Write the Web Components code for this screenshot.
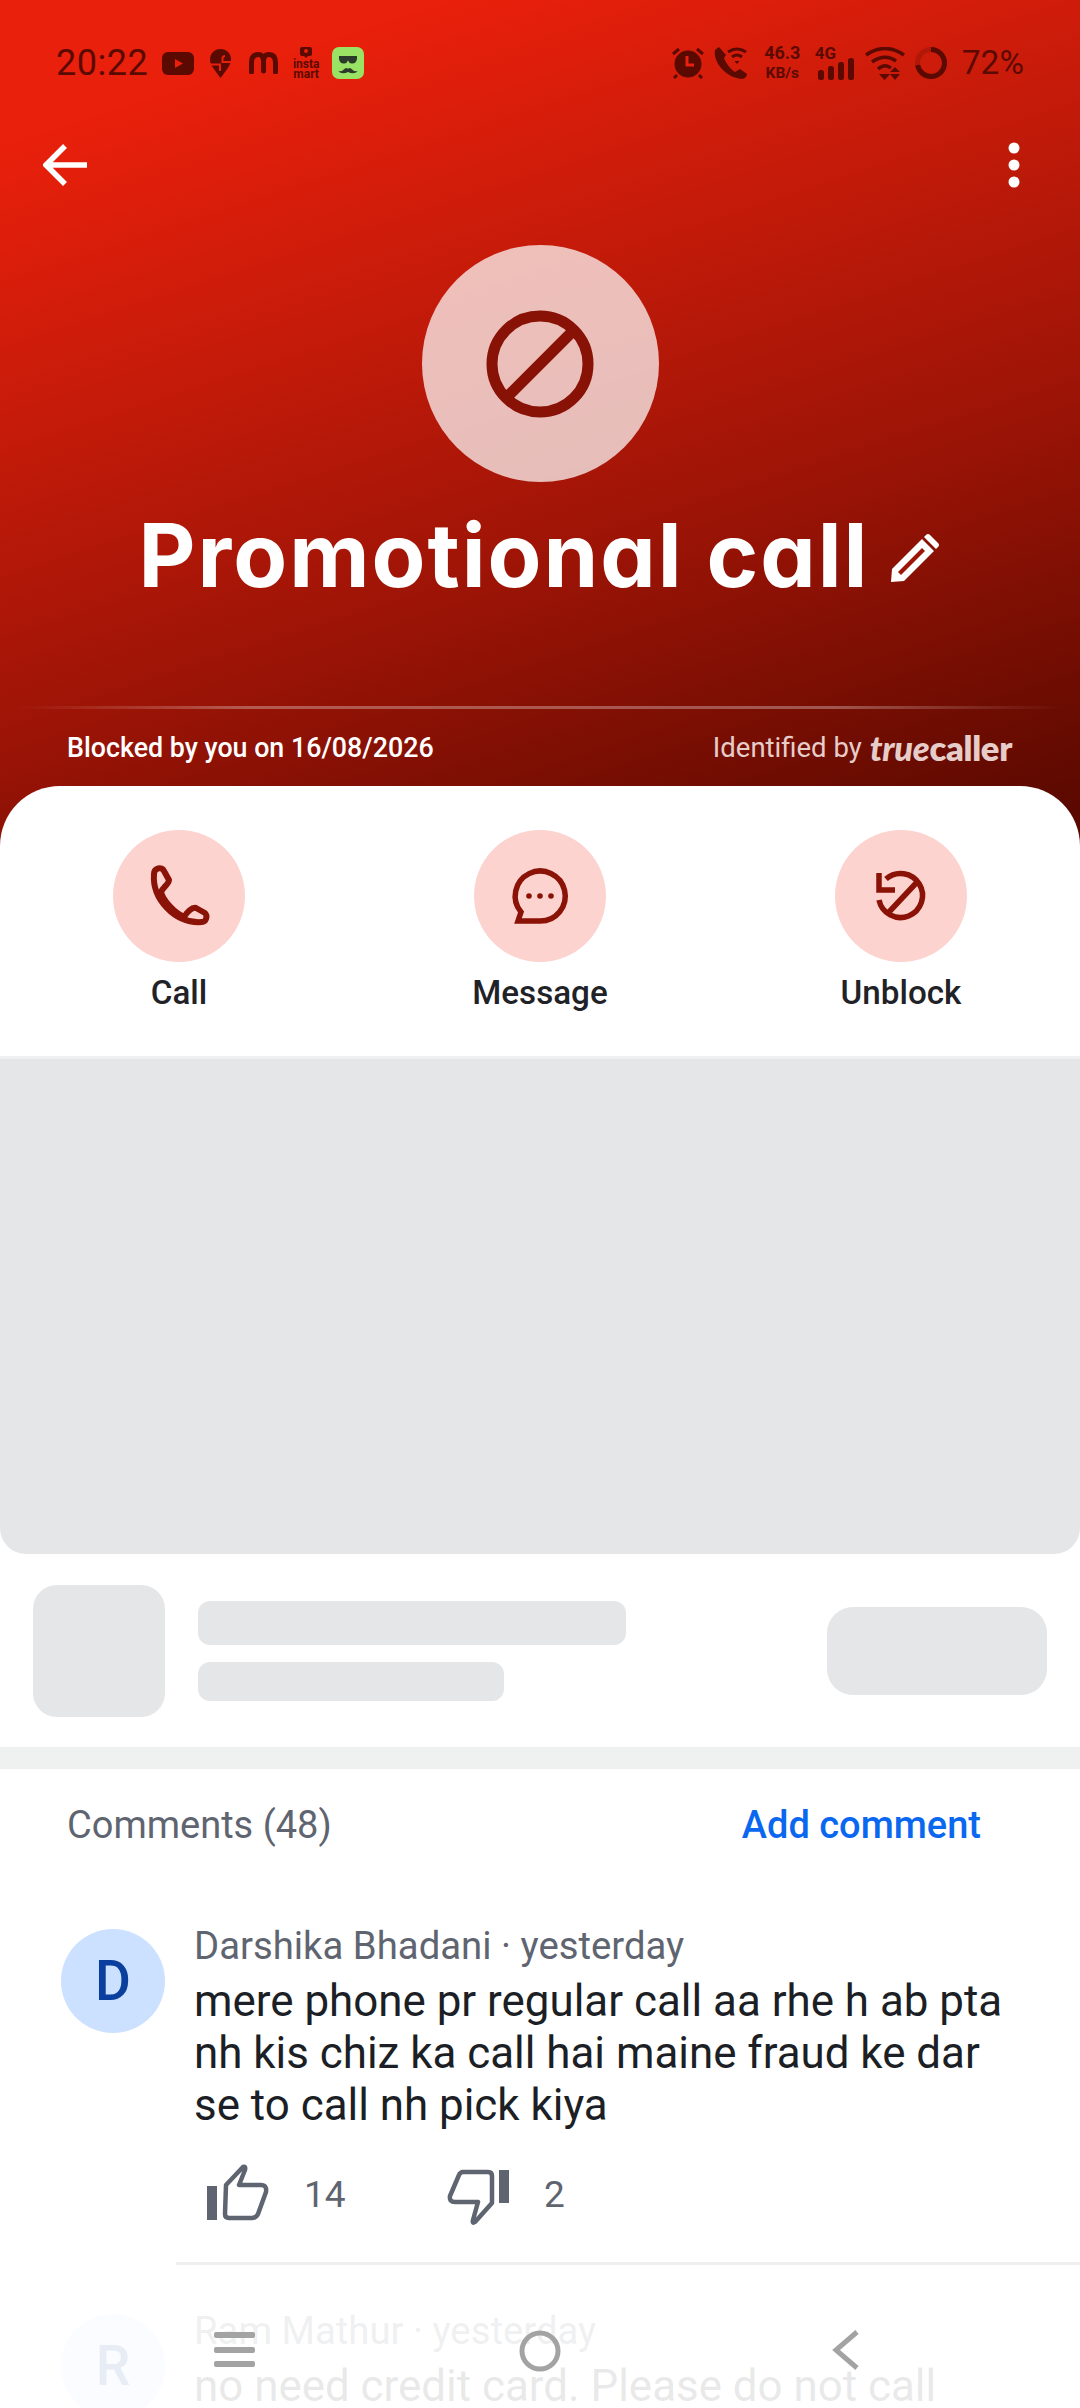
<!doctype html>
<html>
<head>
<meta charset="utf-8">
<style>
html, body { margin: 0; background: #fff; }
body { width: 1080px; height: 2408px; overflow: hidden; position: relative; font-family: Roboto, "Liberation Sans", sans-serif; }
</style>
</head>
<body>
<tc-hero name="Promotional call" blocked="Blocked by you on 16/08/2026"></tc-hero>
<tc-actions>
  <tc-action label="Call" icon="call"></tc-action>
  <tc-action label="Message" icon="message"></tc-action>
  <tc-action label="Unblock" icon="unblock"></tc-action>
</tc-actions>
<tc-skeleton></tc-skeleton>
<tc-comments count="48">
  <tc-comment name="Darshika Bhadani" time="yesterday" likes="14" dislikes="2">mere phone pr regular call aa rhe h ab pta nh kis chiz ka call hai maine fraud ke dar se to call nh pick kiya</tc-comment>
  <tc-comment name="Ram Mathur" time="yesterday">no need credit card. Please do not call</tc-comment>
</tc-comments>
<tc-nav></tc-nav>

<script>
function attach(el, html) {
  const tpl = document.createElement("template");
  tpl.innerHTML = html;
  el.attachShadow({ mode: "open" }).appendChild(tpl.content.cloneNode(true));
}

class TcStatusBar extends HTMLElement {
  constructor() {
    super();
    attach(this, `<style>
:host { display: flex; align-items: center; box-sizing: border-box; height: 126px; padding: 46px 56px 46px; color: #5b0a02; font-family: Roboto, sans-serif; }
svg { display: block; flex: none; }
.time { font-size: 36px; line-height: 34px; letter-spacing: .5px; }
.pct { font-size: 33.5px; line-height: 34px; }
.right { margin-left: auto; display: flex; align-items: center; }
.insta { width: 28px; margin-left: 14px; display: flex; flex-direction: column; align-items: center; font-size: 12px; line-height: 10px; font-weight: 700; }
.speed { margin-left: 16px; width: 39px; text-align: center; font-weight: 700; white-space: nowrap; }
.speed div:first-child { font-size: 18px; line-height: 20px; }
.speed div:last-child { font-size: 15.5px; line-height: 20px; }
.net { margin-left: 13px; position: relative; width: 40px; height: 34px; }
.net span { position: absolute; left: 0; top: -1px; font-size: 17px; line-height: 17px; font-weight: 700; }
.net svg { position: absolute; left: 3px; bottom: 0; }
</style>
<span class="time">20:22</span>
<svg style="margin-left:14px" width="32" height="23" viewBox="0 0 32 23"><rect width="32" height="23" rx="6" fill="currentColor"/><path d="M13 7l8 4.5-8 4.5z" fill="#e8200c"/></svg>
<svg style="margin-left:16px" width="21" height="29" viewBox="0 0 21 29"><path d="M10.5 0C4.5 0 0 4.5 0 10.5 0 15 3 19 10.5 29 18 19 21 15 21 10.5 21 4.5 16.5 0 10.500 0z" fill="currentColor"/><path d="M21 13H12.500V9.500Q12.500 7 15 7M0 15.500H10V22" fill="none" stroke="#e8200c" stroke-width="2"/></svg>
<svg style="margin-left:18px" width="29" height="22" viewBox="0 0 29 22"><path d="M2.500 20V11Q2.500 2.500 9 2.500 14.500 2.500 14.500 9V19M14.500 9Q14.500 2.500 20 2.500 26.500 2.500 26.500 11V20" fill="none" stroke="currentColor" stroke-width="5" stroke-linecap="round"/></svg>
<div class="insta"><svg width="12" height="11" viewBox="0 0 12 11"><path d="M2 0H10Q12 0 12 2V7Q12 9 10 9H8L6 11 4 9H2Q0 9 0 7V2Q0 0 2 0z" fill="currentColor"/><circle cx="6" cy="4" r="2" fill="#e8200c"/></svg><span style="margin-top:1px">insta</span><span>mart</span></div>
<svg style="margin-left:12px" width="32" height="32" viewBox="0 0 32 32"><rect width="32" height="32" rx="7" fill="#9ae264"/><path d="M7 9H25V12Q24 17 19.500 16.500 17 16 16 13.500 15 16 12.500 16.500 8 17 7 12z" fill="#2b3a2b"/><path d="M6 24Q10 25 13 21.500 15 20.500 16 22 17 20.500 19 21.500 22 25 26 24 22 28 16 25 10 28 6 24z" fill="#2b3a2b"/></svg>
<div class="right">
<svg width="32" height="32" viewBox="0 0 32 32"><path d="M1 7L7 2M31 7L25 2M5 28L2 31M27 28L30 31" stroke="currentColor" stroke-width="3"/><circle cx="16" cy="17" r="13.500" fill="currentColor"/><path d="M15 9V18H22" fill="none" stroke="#e8200c" stroke-width="3"/></svg>
<svg style="margin-left:10px" width="33" height="32" viewBox="0 0 33 32"><path d="M5 0L1 3C-1 14 10 30 28 32Q33 31 33 27L26 22 21 25C16 22 12 16 10 11L12 8z" fill="currentColor"/><path d="M14 5Q23-1 32 5M18 10Q23 6 28 10" fill="none" stroke="currentColor" stroke-width="3"/><path d="M20.500 14H25.500L23 17z" fill="currentColor"/></svg>
<div class="speed"><div>46.3</div><div>KB/s</div></div>
<div class="net"><span>4G</span><svg width="37" height="22" viewBox="0 0 37 22"><rect x="0" y="12" width="6" height="10" rx="2.500" fill="currentColor"/><rect x="10" y="8" width="6" height="14" rx="2.500" fill="currentColor"/><rect x="20" y="4" width="6" height="18" rx="2.500" fill="currentColor"/><rect x="30" y="0" width="6" height="22" rx="2.500" fill="currentColor"/></svg></div>
<svg style="margin-left:10px" width="40" height="33" viewBox="0 0 40 33"><path d="M1 8Q20-5 39 8M7 15Q20 6 31 14M13 22Q20 16 26 21" fill="none" stroke="currentColor" stroke-width="3.500"/><path d="M14 27H25L19.500 33zM30 20L35 25H25zM25 27H35L30 33z" fill="currentColor"/></svg>
<svg style="margin-left:10px" width="32" height="34" viewBox="0 0 32 34"><circle cx="16" cy="17" r="13.500" fill="none" stroke="currentColor" stroke-opacity=".25" stroke-width="5"/><circle cx="16" cy="17" r="13.500" fill="none" stroke="currentColor" stroke-width="5" stroke-dasharray="61 85" transform="rotate(-90 16 17)"/></svg>
<span class="pct" style="margin-left:15px">72%</span>
</div>`);
  }
}

class TcHero extends HTMLElement {
  constructor() {
    super();
    attach(this, `<style>
:host { display: block; height: 846px; background: linear-gradient(162deg, #e9200b 12%, #c71b0a 35%, #9c1406 62%, #5a0900 97%); color: #fff; font-family: Roboto, sans-serif; }
.bar { display: flex; align-items: center; justify-content: space-between; height: 78px; padding: 0 60px 0 43px; }
svg { display: block; }
.avatar { margin: 41px auto 0; width: 237px; height: 237px; border-radius: 50%; background: rgba(255,255,255,.72); display: flex; align-items: center; justify-content: center; }
.title { margin-top: 23px; display: flex; justify-content: center; height: 100px; }
h1 { margin: 0; font: 700 88px/100px Inter, sans-serif; font-feature-settings: "cv11"; letter-spacing: 2px; white-space: nowrap; }
.title svg { margin: 27px 0 0 20px; }
.rule { margin: 101px 16px 0; height: 3px; background: linear-gradient(90deg, rgba(255,255,255,0), rgba(255,255,255,.3) 22%, rgba(255,255,255,.3) 78%, rgba(255,255,255,0)); }
.foot { margin-top: 21px; padding: 0 68px 0 67px; display: flex; justify-content: space-between; font-size: 27px; line-height: 36px; }
.blocked { font-size: 26.8px; font-weight: 500; }
.by { color: #e6cdca; display: flex; font-size: 27.5px; }
.logo { margin-left: 8px; font: 800 34.5px/36px Lato, sans-serif; white-space: nowrap; letter-spacing: -.3px; }
.logo i { font-family: Lato, sans-serif; font-weight: 900; }
</style>
<tc-status-bar></tc-status-bar>
<div class="bar">
<svg width="44" height="44" viewBox="0 0 44 44"><path d="M44 22H4M22 3L3 22 22 41" fill="none" stroke="#fff" stroke-width="5.500"/></svg>
<svg width="12" height="46" viewBox="0 0 12 46"><circle cx="6" cy="6" r="5.500" fill="#fff"/><circle cx="6" cy="23" r="5.500" fill="#fff"/><circle cx="6" cy="40" r="5.500" fill="#fff"/></svg>
</div>
<div class="avatar"><svg style="filter:blur(.6px)" width="110" height="110" viewBox="0 0 110 110"><circle cx="55" cy="55" r="48" fill="none" stroke="#881206" stroke-width="11"/><path d="M21 89L89 21" stroke="#881206" stroke-width="11"/></svg></div>
<div class="title"><h1 id="name"></h1><svg width="52" height="52" viewBox="0 0 52 52"><path d="M2 50L3 37 33 7 45 19 15 49zM37 3Q39 1 41 3L49 11Q51 13 49 15L47 17 35 5z" fill="#fff"/><path d="M9 40L33 16 36 19 12 43z" fill="#9c1507"/></svg></div>
<div class="rule"></div>
<div class="foot"><span class="blocked" id="blocked"></span><span class="by">Identified by<span class="logo"><i>true</i>caller</span></span></div>`);
  }
  connectedCallback() {
    this.shadowRoot.getElementById("name").textContent = this.getAttribute("name");
    this.shadowRoot.getElementById("blocked").textContent = this.getAttribute("blocked");
  }
}

class TcActions extends HTMLElement {
  constructor() {
    super();
    attach(this, `<style>
:host { display: grid; position: relative; grid-template-columns: repeat(3, 361px); justify-content: center; box-sizing: border-box; height: 273px; margin-top: -60px; padding-top: 44px; background: #fff; border-radius: 60px 60px 0 0; border-bottom: 3px solid #eff0f1; }
</style><slot></slot>`);
  }
}

const ACTION_ICONS = {
  call: `<path transform="translate(-8 3)" d="M49 41C49 35 57 33 59 38L64 47C64 51 58 54 56 59 58 68 70 80 79 84 82 79 87 74 91 75L100 80C103 83 101 89 97 89 70 91 47 66 49 41Z" fill="none" stroke-width="6" stroke-linejoin="round"/>`,
  message: `<path d="M44 91L66 91A25 25 0 1 0 47 82Z" fill="none" stroke-width="5.500"/><circle cx="55" cy="66" r="2.800" class="f"/><circle cx="66" cy="66" r="2.800" class="f"/><circle cx="77" cy="66" r="2.800" class="f"/>`,
  unblock: `<path d="M51 49A22 22 0 1 1 44 70M44 43V60H60M84 50L54 82" fill="none" stroke-width="5.500"/>`
};

class TcAction extends HTMLElement {
  constructor() {
    super();
    attach(this, `<style>
:host { display: flex; flex-direction: column; align-items: center; font-family: Roboto, sans-serif; }
.disc { width: 132px; height: 132px; border-radius: 50%; background: #fcd3cf; }
svg { display: block; stroke: #8a1207; }
.f { fill: #8a1207; stroke: none; }
.label { margin-top: 12px; font-size: 33.2px; line-height: 38px; font-weight: 480; color: #1f2227; }
</style><div class="disc"><svg id="icon" width="132" height="132" viewBox="0 0 132 132"></svg></div><div class="label" id="label"></div>`);
  }
  connectedCallback() {
    this.shadowRoot.getElementById("label").textContent = this.getAttribute("label");
    this.shadowRoot.getElementById("icon").innerHTML = ACTION_ICONS[this.getAttribute("icon")];
  }
}

class TcSkeleton extends HTMLElement {
  constructor() {
    super();
    attach(this, `<style>
:host { display: block; border-bottom: 22px solid #eff0f0; }
div { background: #e5e6e8; }
.media { height: 495px; border-radius: 0 0 26px 26px; }
.row { background: none; display: flex; align-items: center; padding: 31px 33px 30px; }
.thumb { width: 132px; height: 132px; border-radius: 24px; }
.lines { background: none; margin-left: 33px; display: flex; flex-direction: column; gap: 17px; }
.a { width: 428px; height: 44px; border-radius: 12px; }
.b { width: 306px; height: 39px; border-radius: 12px; }
.btn { margin-left: auto; width: 220px; height: 88px; border-radius: 26px; }
</style><div class="media"></div><div class="row"><div class="thumb"></div><div class="lines"><div class="a"></div><div class="b"></div></div><div class="btn"></div></div>`);
  }
}

class TcComments extends HTMLElement {
  constructor() {
    super();
    attach(this, `<style>
:host { display: block; font-family: Roboto, sans-serif; }
header { display: flex; justify-content: space-between; padding: 32px 99px 80px 67px; font-size: 38px; line-height: 48px; color: #5f6570; }
#title { font-weight: 450; }
a { color: #0a68f0; font-weight: 500; }
</style><header><span id="title"></span><a>Add comment</a></header><slot></slot>`);
  }
  connectedCallback() {
    this.shadowRoot.getElementById("title").textContent = "Comments (" + this.getAttribute("count") + ")";
  }
}

class TcComment extends HTMLElement {
  constructor() {
    super();
    attach(this, `<style>
:host { display: block; font-family: Roboto, sans-serif; }
.main { display: flex; padding-left: 61px; }
.avatar { flex: none; width: 104px; height: 104px; border-radius: 50%; background: #cce0ff; color: #0b3f9e; font-size: 55px; font-weight: 500; line-height: 104px; text-align: center; }
.body { margin-left: 29px; width: 830px; }
.who { padding-top: 1px; font-size: 38.3px; line-height: 32px; color: #5f6570; }
.text { margin-top: 13px; font-size: 43.9px; line-height: 52px; color: #1c1f25; }
.votes { display: flex; margin: 32px 0 0 10px; height: 62px; align-items: center; color: #5f6570; font-size: 37px; }
.vote { display: flex; align-items: center; gap: 34px; }
.vote:first-child { width: 240px; }
svg { display: block; }
.rule { margin: 37px 0 49px 176px; height: 3px; background: #eff0f0; }
</style>
<div class="main"><div class="avatar" id="initial"></div><div class="body">
<div class="who" id="who"></div>
<div class="text"><slot></slot></div>
<div class="votes" id="votes">
<div class="vote"><svg width="66" height="62" viewBox="14 14 66 62"><path d="M17 37H27V71H17z" fill="#5f6570"/><path d="M36 36L53 18Q56 17 55 21L49 36H71Q77 36 76 43L68 65Q66 69 62 69H39Q35 69 35 65z" fill="none" stroke="#5f6570" stroke-width="4.500" stroke-linejoin="round"/></svg><span id="likes"></span></div>
<div class="vote"><svg width="66" height="62" viewBox="254 14 66 62"><path d="M309 21H319V54H309z" fill="#5f6570"/><path d="M272 23H298Q302 23 302 27V54L285 73Q282 75 283 71L288 53H265Q259 53 260 47L269 26Q270 23 274 23z" fill="none" stroke="#5f6570" stroke-width="4.500" stroke-linejoin="round"/></svg><span id="dislikes"></span></div>
</div></div></div>
<div class="rule" id="rule"></div>`);
  }
  connectedCallback() {
    const root = this.shadowRoot;
    const name = this.getAttribute("name");
    root.getElementById("initial").textContent = name.charAt(0);
    root.getElementById("who").textContent = name + " · " + this.getAttribute("time");
    if (this.hasAttribute("likes")) {
      root.getElementById("likes").textContent = this.getAttribute("likes");
      root.getElementById("dislikes").textContent = this.getAttribute("dislikes");
    } else {
      // the next comment is cut off by the bottom of the screen
      root.getElementById("votes").remove();
      root.getElementById("rule").remove();
    }
  }
}

class TcNav extends HTMLElement {
  constructor() {
    super();
    attach(this, `<style>
:host { position: absolute; left: 0; right: 0; bottom: 0; height: 118px; box-sizing: border-box; padding-top: 40px; display: grid; grid-template-columns: repeat(3, 305.5px); justify-content: center; justify-items: center; align-items: start; background: linear-gradient(rgba(255,255,255,0), rgba(255,255,255,.9) 24px); }
svg { display: block; }
</style>
<svg width="42" height="40" viewBox="0 0 42 40"><rect y="2" width="41" height="6" rx="2" fill="#a3a3a3"/><rect y="17" width="41" height="6" rx="2" fill="#a3a3a3"/><rect y="31" width="41" height="6" rx="2" fill="#a3a3a3"/></svg>
<svg width="42" height="42" viewBox="0 0 42 42"><circle cx="21" cy="21" r="18" fill="none" stroke="#a3a3a3" stroke-width="5"/></svg>
<svg width="28" height="40" viewBox="0 0 28 40"><path d="M25 2L4 20 25 38" fill="none" stroke="#a3a3a3" stroke-width="5"/></svg>`);
  }
}

customElements.define("tc-status-bar", TcStatusBar);
customElements.define("tc-hero", TcHero);
customElements.define("tc-actions", TcActions);
customElements.define("tc-action", TcAction);
customElements.define("tc-skeleton", TcSkeleton);
customElements.define("tc-comments", TcComments);
customElements.define("tc-comment", TcComment);
customElements.define("tc-nav", TcNav);
</script>
</body>
</html>
